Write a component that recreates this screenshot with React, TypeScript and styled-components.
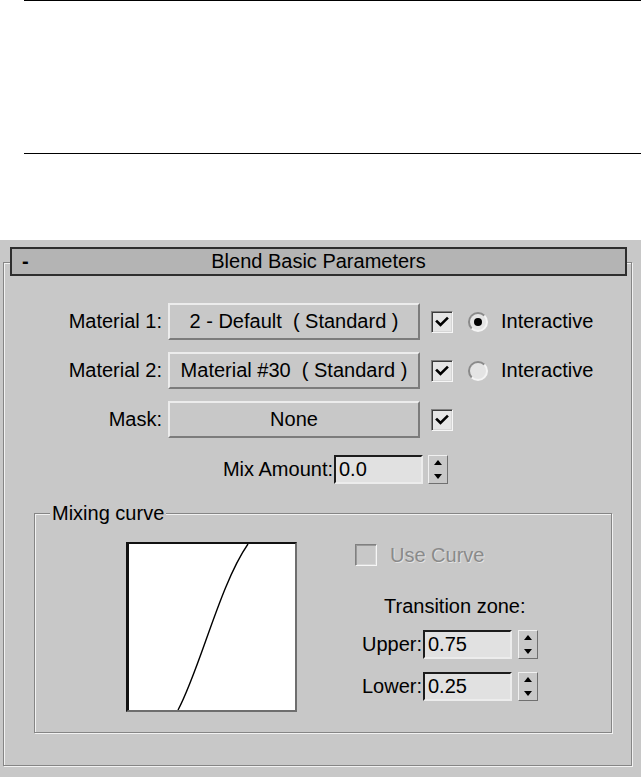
import React from "react";
import styled, { createGlobalStyle } from "styled-components";

const Global = createGlobalStyle`
  html, body { margin: 0; padding: 0; background: #ffffff; }
  body {
    font-family: "Liberation Sans", Arial, sans-serif;
    font-size: 20px;
    color: #000;
    width: 641px;
    overflow: hidden;
  }
  * { box-sizing: border-box; }
`;

const Page = styled.div`
  width: 641px;
  height: 777px;
  display: flex;
  flex-direction: column;
`;

const TopRule = styled.div`
  margin-left: 24px;
  height: 154px;
  flex: none;
  border-top: 1px solid #000;
  border-bottom: 1px solid #000;
`;

const Panel = styled.section`
  margin-top: 86px;
  flex: 1;
  background: #c8c8c8;
  padding-top: 22px;
`;

const Frame = styled.div`
  margin-left: 3px;
  width: 629px;
  height: 504px;
  border: 1px solid #858585;
  box-shadow: inset 1px 1px 0 #f2f2f2, 1px 1px 0 #f2f2f2;
  display: flex;
  flex-direction: column;
`;

const TitleBar = styled.div`
  margin: -16px 0 0 6px;
  width: 617px;
  height: 29px;
  flex: none;
  border: 2px solid #2e2e2e;
  background: #b4b4b4;
  display: grid;
  grid-template-columns: 1fr auto 1fr;
  align-items: center;
  line-height: 25px;
`;

const Collapse = styled.span`
  padding-left: 10px;
  font-weight: bold;
`;

const Rows = styled.div`
  margin-top: 27px;
  display: flex;
  flex-direction: column;
  gap: 12px;
`;

const Row = styled.div<{ $h?: number; $mt?: number }>`
  display: flex;
  align-items: center;
  height: ${(p) => p.$h ?? 37}px;
  margin-top: ${(p) => p.$mt ?? 0}px;
  flex: none;
`;

const Label = styled.span<{ $w: number }>`
  width: ${(p) => p.$w}px;
  flex: none;
  text-align: right;
  white-space: nowrap;
`;

const MatButton = styled.div`
  margin-left: 6px;
  width: 252px;
  height: 37px;
  flex: none;
  background: #c8c8c8;
  border: 2px solid;
  border-color: #ececec #7c7c7c #7c7c7c #ececec;
  display: flex;
  align-items: center;
  justify-content: center;
  white-space: pre;
`;

const CheckBox = styled.span<{ $disabled?: boolean; $ml: number }>`
  margin-left: ${(p) => p.$ml}px;
  width: 22px;
  height: 22px;
  flex: none;
  border: 1px solid;
  border-color: #808080 #f6f6f6 #f6f6f6 #808080;
  box-shadow: inset 1px 1px 0 ${(p) => (p.$disabled ? "#9a9a9a" : "#3c3c3c")},
    inset -1px -1px 0 #d6d6d6;
  background: ${(p) => (p.$disabled ? "#c8c8c8" : "#e6e6e6")};
  display: flex;
  align-items: center;
  justify-content: center;
`;

const Radio = styled.span<{ $on?: boolean }>`
  margin-left: 15px;
  width: 20px;
  height: 20px;
  flex: none;
  border-radius: 50%;
  border: 2px solid;
  border-color: #8a8a8a #f4f4f4 #f4f4f4 #8a8a8a;
  background: #e4e4e4;
  display: flex;
  align-items: center;
  justify-content: center;
  &::after {
    content: "";
    width: 8px;
    height: 8px;
    border-radius: 50%;
    background: ${(p) => (p.$on ? "#000" : "transparent")};
  }
`;

const OptionText = styled.span<{ $disabled?: boolean }>`
  margin-left: 13px;
  white-space: nowrap;
  color: ${(p) => (p.$disabled ? "#8a8a8a" : "#000")};
  text-shadow: ${(p) => (p.$disabled ? "1px 1px 0 #e2e2e2" : "none")};
`;

const Field = styled.div`
  margin-left: 1px;
  width: 89px;
  height: 29px;
  flex: none;
  border: 2px solid;
  border-color: #1c1c1c #ececec #ececec #1c1c1c;
  background: #e1e1e1;
  padding-left: 3px;
  line-height: 25px;
`;

const Spinner = styled.div<{ $ml: number }>`
  margin-left: ${(p) => p.$ml}px;
  width: 20px;
  height: 29px;
  flex: none;
  border: 1px solid;
  border-color: #f0f0f0 #707070 #707070 #f0f0f0;
  background: #c8c8c8;
  display: flex;
  flex-direction: column;
`;

const SpinHalf = styled.span<{ $down?: boolean }>`
  flex: 1;
  display: flex;
  align-items: center;
  justify-content: center;
  &::after {
    content: "";
    width: 0;
    height: 0;
    border-left: 4px solid transparent;
    border-right: 4px solid transparent;
    ${(p) =>
      p.$down ? "border-top: 5px solid #000;" : "border-bottom: 5px solid #000;"}
  }
`;

const Group = styled.fieldset`
  margin: 19px 0 0 30px;
  width: 578px;
  min-width: 0;
  border: 1px solid #858585;
  box-shadow: inset 1px 1px 0 #f2f2f2, 1px 1px 0 #f2f2f2;
  padding: 0 0 20px 15px;
`;

const Legend = styled.legend`
  padding: 0 2px;
  line-height: 20px;
  background: #c8c8c8;
`;

const GroupBody = styled.div`
  display: flex;
  align-items: flex-start;
  margin-top: 19px;
`;

const CurveBox = styled.div`
  margin-left: 76px;
  width: 171px;
  height: 170px;
  flex: none;
  background: #fff;
  border: 2px solid;
  border-color: #111 #6e6e6e #6e6e6e #111;
  box-shadow: inset 1px 0 0 #111;
`;

const RightCol = styled.div`
  margin-left: 58px;
  margin-top: 2px;
  display: flex;
  flex-direction: column;
`;

const Caption = styled.div`
  margin-top: 30px;
  margin-left: 29px;
  line-height: 20px;
  white-space: nowrap;
`;

const Tick = () => (
  <svg width="14" height="14" viewBox="0 0 14 14">
    <path d="M2 6.5 L5.5 10 L12 3.5" fill="none" stroke="#000" strokeWidth="2.6" strokeLinecap="square" />
  </svg>
);

const Spin = ({ ml }: { ml: number }) => (
  <Spinner $ml={ml}>
    <SpinHalf />
    <SpinHalf $down />
  </Spinner>
);

export default function App() {
  return (
    <Page>
      <Global />
      <TopRule />
      <Panel>
        <Frame>
          <TitleBar>
            <Collapse>-</Collapse>
            <span>Blend Basic Parameters</span>
            <span />
          </TitleBar>
          <Rows>
            <Row>
              <Label $w={158}>Material 1:</Label>
              <MatButton>{"2 - Default  ( Standard )"}</MatButton>
              <CheckBox $ml={11}>
                <Tick />
              </CheckBox>
              <Radio $on />
              <OptionText>Interactive</OptionText>
            </Row>
            <Row>
              <Label $w={158}>Material 2:</Label>
              <MatButton>{"Material #30  ( Standard )"}</MatButton>
              <CheckBox $ml={11}>
                <Tick />
              </CheckBox>
              <Radio />
              <OptionText>Interactive</OptionText>
            </Row>
            <Row>
              <Label $w={158}>Mask:</Label>
              <MatButton>None</MatButton>
              <CheckBox $ml={11}>
                <Tick />
              </CheckBox>
            </Row>
            <Row $h={29} $mt={5}>
              <Label $w={329}>Mix Amount:</Label>
              <Field>0.0</Field>
              <Spin ml={5} />
            </Row>
          </Rows>
          <Group>
            <Legend>Mixing curve</Legend>
            <GroupBody>
              <CurveBox>
                <svg width="167" height="166" viewBox="0 0 167 166">
                  <path
                    d="M50 166 C 72 125, 92 40, 120 0"
                    fill="none"
                    stroke="#000"
                    strokeWidth="1.4"
                  />
                </svg>
              </CurveBox>
              <RightCol>
                <Row $h={22}>
                  <CheckBox $ml={0} $disabled />
                  <OptionText $disabled>Use Curve</OptionText>
                </Row>
                <Caption>Transition zone:</Caption>
                <Row $h={29} $mt={14}>
                  <Label $w={67}>Upper:</Label>
                  <Field>0.75</Field>
                  <Spin ml={6} />
                </Row>
                <Row $h={29} $mt={13}>
                  <Label $w={67}>Lower:</Label>
                  <Field>0.25</Field>
                  <Spin ml={6} />
                </Row>
              </RightCol>
            </GroupBody>
          </Group>
        </Frame>
      </Panel>
    </Page>
  );
}
